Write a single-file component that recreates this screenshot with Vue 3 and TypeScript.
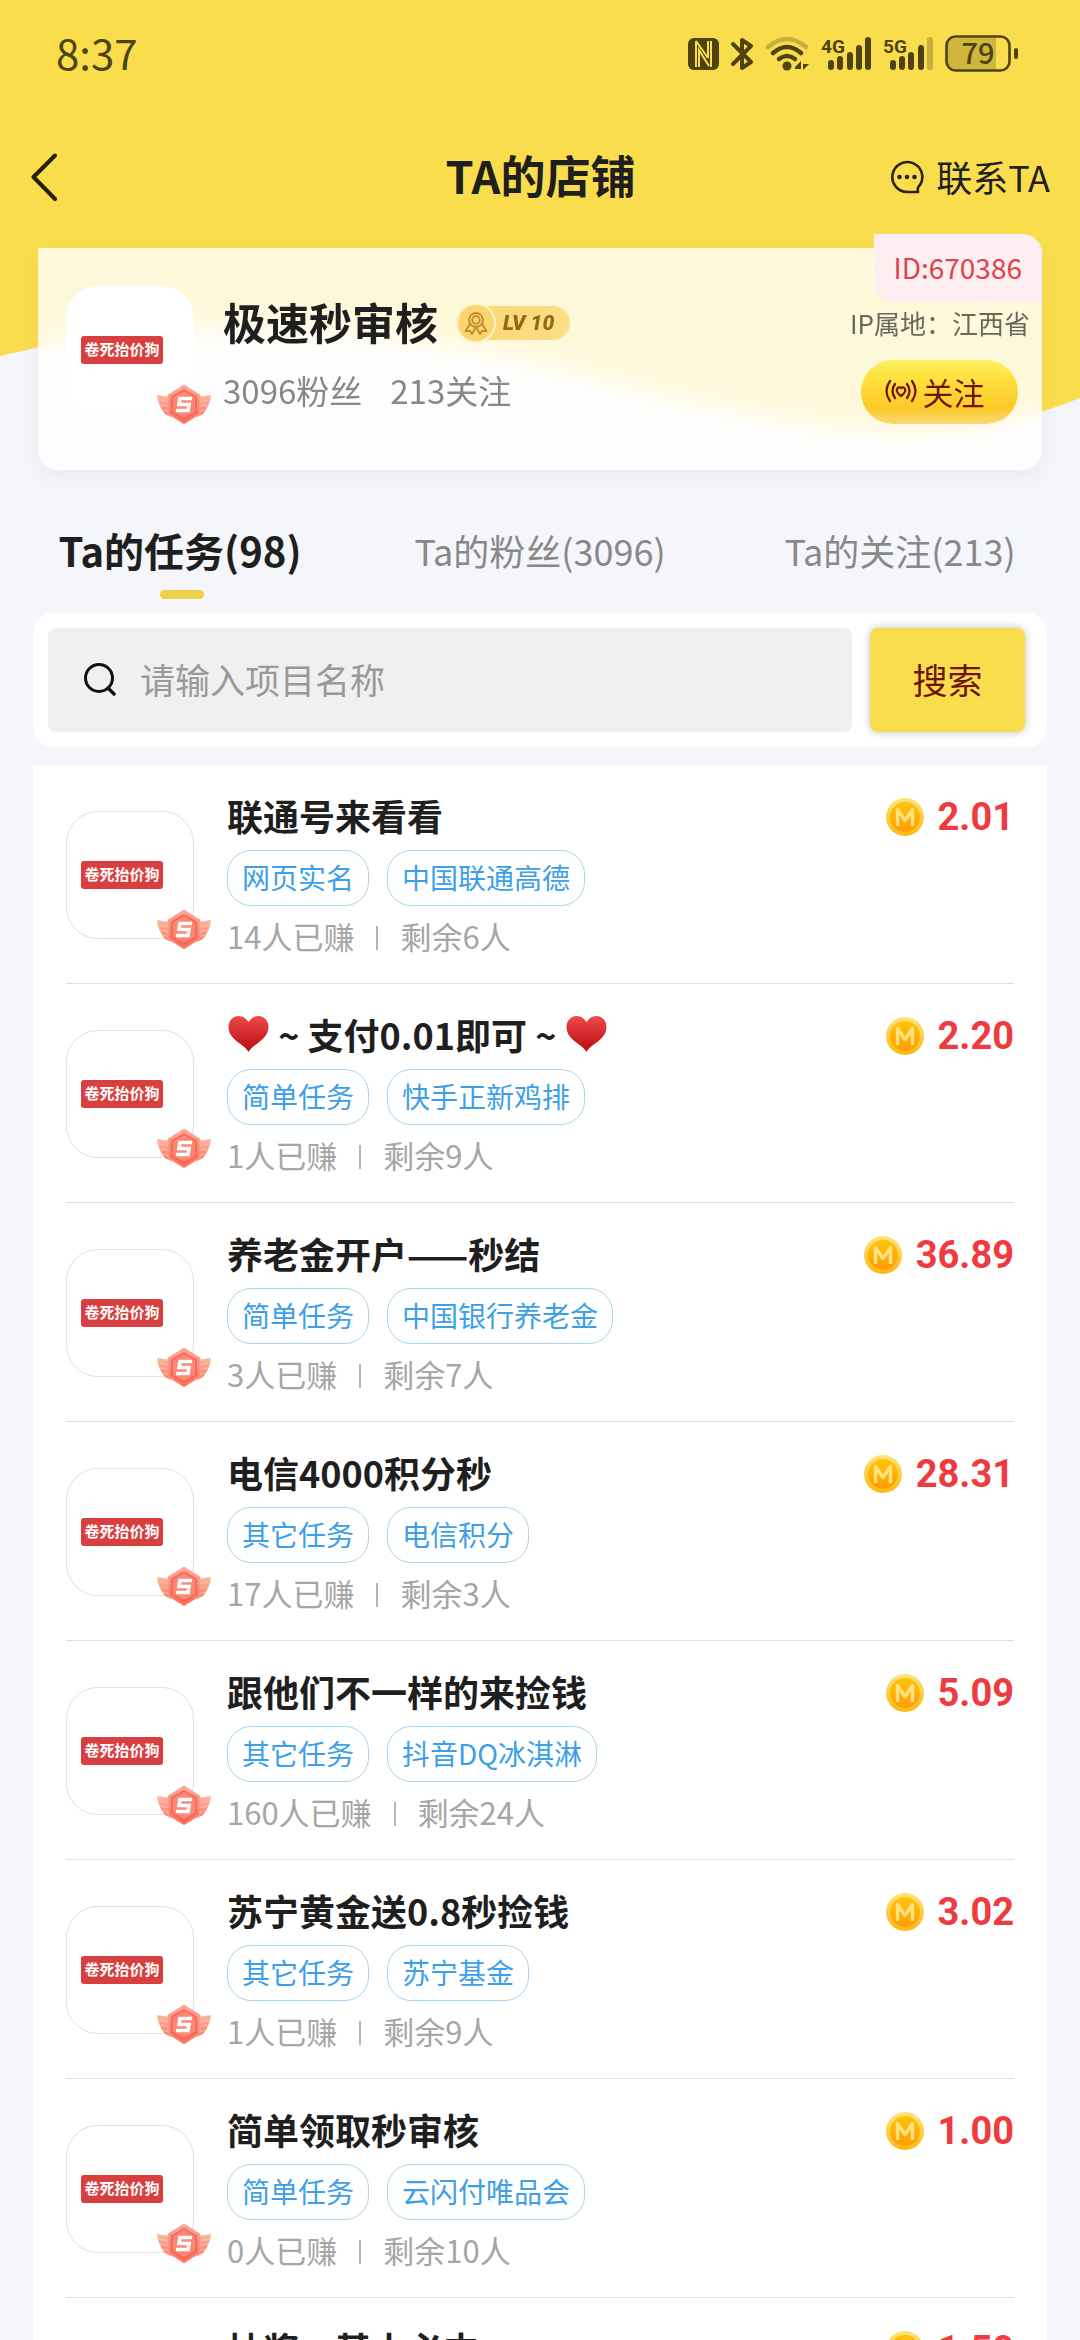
<script setup lang="ts">
import { ref } from 'vue'

interface Task {
  title: string
  tags: [string, string]
  done: number
  left: number
  price: string
}

const tasks: Task[] = [
  { title: '联通号来看看', tags: ['网页实名', '中国联通高德'], done: 14, left: 6, price: '2.01' },
  { title: '♥ ~ 支付0.01即可 ~ ♥', tags: ['简单任务', '快手正新鸡排'], done: 1, left: 9, price: '2.20' },
  { title: '养老金开户——秒结', tags: ['简单任务', '中国银行养老金'], done: 3, left: 7, price: '36.89' },
  { title: '电信4000积分秒', tags: ['其它任务', '电信积分'], done: 17, left: 3, price: '28.31' },
  { title: '跟他们不一样的来捡钱', tags: ['其它任务', '抖音DQ冰淇淋'], done: 160, left: 24, price: '5.09' },
  { title: '苏宁黄金送0.8秒捡钱', tags: ['其它任务', '苏宁基金'], done: 1, left: 9, price: '3.02' },
  { title: '简单领取秒审核', tags: ['简单任务', '云闪付唯品会'], done: 0, left: 10, price: '1.00' },
  { title: '抽奖，基本必中', tags: ['简单任务', '抽奖'], done: 0, left: 10, price: '1.50' },
]

const tabs = ['Ta的任务(98)', 'Ta的粉丝(3096)', 'Ta的关注(213)']
const activeTab = ref(0)
const keyword = ref('')

// Splits a title so that every heart becomes its own piece
const pieces = (title: string): string[] => title.split(/(♥)/).filter(Boolean)
</script>

<template>
  <div class="page">
    <svg class="wave" viewBox="0 0 1080 440" preserveAspectRatio="none" aria-hidden="true">
      <path fill="#fadd4d" d="M0 0H1080V398C1000 430 930 440 830 428C640 405 560 350 330 335C200 326 100 332 0 356Z" />
    </svg>

    <svg class="defs" width="0" height="0" aria-hidden="true">
      <defs>
        <linearGradient id="medalFill" x1="0" y1="0" x2="0" y2="1">
          <stop offset="0" stop-color="#fba797" /><stop offset="1" stop-color="#fb6a55" />
        </linearGradient>
        <linearGradient id="wingFill" x1="0" y1="0" x2="0" y2="1">
          <stop offset="0" stop-color="#fdb79e" /><stop offset="1" stop-color="#fa7763" />
        </linearGradient>
        <linearGradient id="coinFill" x1="0" y1="0" x2="0" y2="1">
          <stop offset="0" stop-color="#ffc40c" /><stop offset="1" stop-color="#ff9c05" />
        </linearGradient>
        <linearGradient id="coinRim" x1="0" y1="0" x2="0" y2="1">
          <stop offset="0" stop-color="#fbe57c" /><stop offset="1" stop-color="#fcb80e" />
        </linearGradient>
        <linearGradient id="heartFill" x1="0" y1="0" x2="0" y2="1">
          <stop offset="0" stop-color="#ef4a4c" /><stop offset="1" stop-color="#b80a0c" />
        </linearGradient>
        <symbol id="medal" viewBox="0 0 54 41">
          <path fill="url(#wingFill)" d="M0 11 14 13V33L8 30 5 26 3 22 1 17Z M54 11 40 13V33L46 30 49 26 51 22 53 17Z" />
          <path d="M1 16 13 18M3 21 13 23M5 26 13 28M53 16 41 18M51 21 41 23M49 26 41 28" stroke="#fcc0ae" stroke-width="1" />
          <path fill="url(#medalFill)" stroke="#fcab9b" stroke-width="1" d="M27 1 43 11V30L27 40 11 30V11Z" />
          <path fill="#fb8774" stroke="#f2604f" stroke-width="1.400" d="M27 6 39 13V28L27 35 15 28V13Z" />
          <path fill="none" stroke="#fff" stroke-width="3.600" d="M35 14.500H23L22 20.500H32L31 26.500H19" />
        </symbol>
        <symbol id="coin" viewBox="0 0 38 38">
          <circle cx="19" cy="19" r="19" fill="url(#coinRim)" />
          <circle cx="19" cy="19" r="15" fill="url(#coinFill)" />
          <path fill="none" stroke="#ffe27c" stroke-width="3.400" stroke-linejoin="round" d="M11.500 28V11.500L19 22.500 26.500 11.500V28" />
        </symbol>
        <symbol id="heart" viewBox="0 0 40 36">
          <path fill="url(#heartFill)" d="M20 36C16 28 0 24 0 11C0 4 5 0 10 0C15 0 18 3 20 6C22 3 25 0 30 0C35 0 40 4 40 11C40 24 24 28 20 36Z" />
        </symbol>
      </defs>
    </svg>

    <div class="status">
      <span class="clock">8:37</span>
      <svg class="indicators" viewBox="0 0 332 40" aria-hidden="true">
        <g fill="#4f4410">
          <rect x="0" y="4" width="31" height="32" rx="6" />
          <g fill="none" stroke="#fadd4d" stroke-width="2">
            <path d="M8 7V33M11 33V16L21 32M23 33V7M20 24V7M8 7 20 24" />
          </g>
          <path d="M45 10 63 28 54 34V6L63 12 45 30" fill="none" stroke="#4f4410" stroke-width="4" stroke-linejoin="round" stroke-linecap="round" />
          <g fill="none" stroke="#4f4410" stroke-width="4.500" stroke-linecap="round">
            <path opacity=".3" d="M80 13Q99 -3 118 13" />
            <path d="M85 19Q99 7 113 19" />
            <path d="M91 25Q99 19 107 25" />
          </g>
          <circle cx="99" cy="32" r="4.500" />
          <path d="M107 33 113 27V35H107ZM115 27V36L121 30H115Z" />
          <text x="133" y="19" class="net">4G</text>
          <rect x="140" y="26" width="6" height="10" rx="3" /><rect x="149" y="22" width="6" height="14" rx="3" />
          <rect x="159" y="18" width="6" height="18" rx="3" /><rect x="168" y="11" width="6" height="25" rx="3" />
          <rect x="177" y="3" width="6" height="33" rx="3" />
          <text x="195" y="19" class="net">5G</text>
          <rect x="202" y="26" width="6" height="10" rx="3" /><rect x="211" y="22" width="6" height="14" rx="3" />
          <rect x="220" y="18" width="6" height="18" rx="3" /><rect x="230" y="11" width="6" height="25" rx="3" />
          <rect x="239" y="3" width="6" height="33" rx="3" opacity=".3" />
          <path opacity=".25" d="M266 4H308V36H266Q259 36 259 28V12Q259 4 266 4Z" />
          <rect x="258.500" y="2.500" width="63" height="34" rx="9" fill="none" stroke="#4f4410" stroke-width="2.600" />
          <rect x="326" y="14" width="4" height="11" rx="2" />
          <text x="290" y="30" text-anchor="middle" class="battery">79</text>
        </g>
      </svg>
    </div>

    <header class="bar">
      <button class="back" type="button" aria-label="返回">
        <svg viewBox="0 0 26 48" width="26" height="48"><path d="M24 2.500 2.500 24 24 46" fill="none" stroke="#261f0c" stroke-width="4" stroke-linecap="round" stroke-linejoin="round" /></svg>
      </button>
      <h1>TA的店铺</h1>
      <button class="contact" type="button">
        <svg viewBox="0 0 34 34" width="34" height="34">
          <path d="M17 32A15 15 0 1 1 30 25Q27 27 28 32Z" fill="none" stroke="#2b230c" stroke-width="2.600" stroke-linejoin="round" />
          <circle cx="9.500" cy="17" r="2.300" fill="#2b230c" /><circle cx="17" cy="17" r="2.300" fill="#2b230c" /><circle cx="24.500" cy="17" r="2.300" fill="#2b230c" />
        </svg>
        <span>联系TA</span>
      </button>
    </header>

    <section class="profile">
      <div class="avatar plain">
        <span class="stamp">卷死抬价狗</span>
        <svg class="medal"><use href="#medal" /></svg>
      </div>
      <div class="who">
        <div class="name-line">
          <h2>极速秒审核</h2>
          <span class="level">
            <svg viewBox="0 0 40 40" width="40" height="40" aria-hidden="true">
              <circle cx="20" cy="20" r="19" fill="#fad572" stroke="#fef3c6" stroke-width="2" />
              <g fill="none" stroke="#c18c25" stroke-width="1.800" stroke-linejoin="round">
                <circle cx="20" cy="17" r="7" /><circle cx="20" cy="17" r="3.800" />
                <path d="M14 21 9.500 28 14 28 16 31 20 24 24 31 26 28 30.500 28 26 21" />
              </g>
            </svg>
            <span>LV 10</span>
          </span>
        </div>
        <div class="stats"><span>3096粉丝</span><span>213关注</span></div>
      </div>
      <div class="side">
        <span class="uid">ID:670386</span>
        <span class="region">IP属地：江西省</span>
        <button class="follow" type="button">
          <svg viewBox="0 0 32 24" width="32" height="24" aria-hidden="true">
            <g fill="none" stroke="#701407" stroke-width="2.200" stroke-linecap="round" stroke-linejoin="round">
              <path d="M5 2Q-2 12 5 22M10 5Q5 12 10 19M27 2Q34 12 27 22M22 5Q27 12 22 19" />
              <path d="M16 17C12 14 11 12 12 10C13 8 15 8 16 9C17 8 19 8 20 10C21 12 20 14 16 17Z" />
            </g>
          </svg>
          <span>关注</span>
        </button>
      </div>
    </section>

    <nav class="tabs">
      <button
        v-for="(tab, i) in tabs"
        :key="tab"
        type="button"
        :class="{ active: i === activeTab }"
        @click="activeTab = i"
      >{{ tab }}</button>
    </nav>

    <form class="search" @submit.prevent>
      <label class="field">
        <svg viewBox="0 0 34 34" width="34" height="34" aria-hidden="true">
          <circle cx="16" cy="16" r="13.500" fill="none" stroke="#111" stroke-width="3" />
          <path d="M25 26 31 32" stroke="#111" stroke-width="3.400" stroke-linecap="round" />
        </svg>
        <input v-model="keyword" type="text" placeholder="请输入项目名称" aria-label="项目名称" />
      </label>
      <button type="submit">搜索</button>
    </form>

    <ul class="list">
      <li v-for="task in tasks" :key="task.title" class="task">
        <div class="avatar">
          <span class="stamp">卷死抬价狗</span>
          <svg class="medal"><use href="#medal" /></svg>
        </div>
        <div class="body">
          <h3>
            <template v-for="(piece, i) in pieces(task.title)" :key="i">
              <svg v-if="piece === '♥'" class="heart" role="img" aria-label="♥"><use href="#heart" /></svg>
              <span v-else>{{ piece }}</span>
            </template>
          </h3>
          <div class="tags"><span v-for="tag in task.tags" :key="tag">{{ tag }}</span></div>
          <p class="meta"><span>{{ task.done }}人已赚</span><i></i><span>剩余{{ task.left }}人</span></p>
        </div>
        <div class="price">
          <svg class="coin" aria-hidden="true"><use href="#coin" /></svg>
          <b>{{ task.price }}</b>
        </div>
      </li>
    </ul>
  </div>
</template>

<style>
body {
  margin: 0;
  background: #f5f6fb;
}
</style>

<style scoped>
* {
  box-sizing: border-box;
}

.page {
  position: relative;
  isolation: isolate;
  display: flex;
  flex-direction: column;
  height: 100vh;
  overflow: hidden;
  background: #f5f6fb;
  color: #1f1f1f;
  font-family: "Noto Sans CJK SC", sans-serif;
}

h1, h2, h3, p, ul {
  margin: 0;
  padding: 0;
}

button {
  border: 0;
  padding: 0;
  background: none;
  color: inherit;
  font: inherit;
}

.wave {
  position: absolute;
  z-index: -1;
  top: 0;
  left: 0;
  width: 100%;
  height: 440px;
}

.defs {
  position: absolute;
}

.status {
  flex: none;
  display: flex;
  align-items: center;
  justify-content: space-between;
  height: 108px;
  padding: 0 60px 0 56px;
  color: #4f4410;
}

.clock {
  padding-bottom: 4px;
  font-size: 42px;
  line-height: 48px;
}

.indicators {
  width: 332px;
  height: 40px;
}

.net {
  font: 700 19px Roboto, sans-serif;
}

.battery {
  font: 500 29px "Noto Sans CJK SC", sans-serif;
}

.bar {
  flex: none;
  display: grid;
  grid-template-columns: 1fr auto 1fr;
  align-items: center;
  height: 140px;
  padding: 0 30px 2px 31px;
}

.back {
  justify-self: start;
  display: flex;
}

.bar h1 {
  padding-bottom: 4px;
  font-size: 45px;
  font-weight: 700;
  line-height: 60px;
}

.contact {
  justify-self: end;
  display: flex;
  align-items: center;
  gap: 12px;
  font-size: 36px;
  line-height: 48px;
}

.contact span {
  padding-bottom: 2px;
}

.profile {
  flex: none;
  position: relative;
  display: flex;
  height: 222px;
  margin: 0 38px;
  padding: 38px 12px 0 28px;
  border-radius: 0 0 20px 20px;
  background: rgba(255, 255, 255, 0.8);
  backdrop-filter: blur(12px);
  box-shadow: 0 8px 20px rgba(60, 60, 90, 0.05);
}

.avatar {
  flex: none;
  position: relative;
  display: flex;
  align-items: center;
  width: 128px;
  height: 128px;
  padding-left: 14px;
  border: 1px solid #e0e0e0;
  border-radius: 32px;
  background: #fff;
}

.avatar.plain {
  border-color: #fff;
}

.stamp {
  width: 82px;
  padding-bottom: 2px;
  border-radius: 3px;
  background: #da3f3f;
  color: #fff;
  font-size: 15px;
  font-weight: 700;
  line-height: 26px;
  text-align: center;
}

.medal {
  position: absolute;
  right: -18px;
  bottom: -12px;
  width: 54px;
  height: 41px;
}

.who {
  flex: 1;
  padding: 4px 0 0 29px;
}

.name-line {
  display: flex;
  align-items: center;
  gap: 18px;
}

.name-line h2 {
  font-size: 43px;
  font-weight: 700;
  line-height: 62px;
}

.level {
  display: flex;
  align-items: center;
  height: 34px;
  padding-right: 16px;
  margin-top: 4px;
  border-radius: 17px;
  background: linear-gradient(90deg, #fad572, #fbdf86);
  color: #966813;
  font: italic 900 21px Roboto, sans-serif;
}

.level span {
  margin-left: 7px;
}

.stats {
  display: flex;
  gap: 28px;
  padding-top: 14px;
  color: #888;
  font-size: 33px;
  line-height: 48px;
}

.side {
  display: flex;
  flex-direction: column;
  align-items: flex-end;
}

.uid {
  position: absolute;
  top: -14px;
  right: 0;
  padding: 0 20px 2px;
  border-radius: 0 20px 0 20px;
  background: #fdeff1;
  color: #dc434a;
  font-size: 28px;
  line-height: 66px;
}

.region {
  margin-top: 18px;
  color: #69685c;
  font-size: 26px;
  line-height: 38px;
}

.follow {
  display: flex;
  align-items: center;
  justify-content: center;
  gap: 6px;
  width: 157px;
  height: 64px;
  margin: 18px 12px 0 0;
  padding: 0 10px 2px 0;
  border-radius: 32px;
  background: linear-gradient(#fcf062, #fee340 25%, #fdc927 75%, #fbd974);
  color: #701407;
  font-size: 31px;
}

.tabs {
  flex: none;
  display: grid;
  grid-template-columns: repeat(3, 1fr);
  height: 143px;
  padding-top: 50px;
}

.tabs button {
  position: relative;
  height: 60px;
  color: #888;
  font-size: 36px;
  line-height: 60px;
}

.tabs .active {
  color: #1f1f1f;
  font-size: 40px;
  font-weight: 700;
}

.tabs .active::after {
  content: "";
  position: absolute;
  bottom: -19px;
  left: 50%;
  width: 44px;
  height: 9px;
  margin-left: -20px;
  border-radius: 5px;
  background: #ebd24a;
}

.search {
  flex: none;
  display: flex;
  gap: 18px;
  margin: 0 33px 18px;
  padding: 15px 22px 15px 15px;
  border-radius: 20px;
  background: #fff;
}

.field {
  flex: 1;
  display: flex;
  align-items: center;
  gap: 23px;
  height: 104px;
  padding: 0 35px 3px;
  border-radius: 8px;
  background: #f0f0f0;
}

.field input {
  flex: 1;
  min-width: 0;
  border: 0;
  padding: 0;
  outline: none;
  background: none;
  color: #333;
  font: inherit;
  font-size: 35px;
}

.field input::placeholder {
  color: #999;
}

.search button {
  width: 155px;
  padding-bottom: 4px;
  border-radius: 8px;
  background: #fadd4d;
  box-shadow: 0 0 8px rgba(0, 0, 0, 0.25);
  color: #701407;
  font-size: 35px;
}

.list {
  flex: 1;
  min-height: 0;
  margin: 0 33px;
  padding: 0 33px;
  overflow: hidden;
  background: #fff;
  list-style: none;
}

.task {
  display: flex;
  height: 219px;
  padding-top: 28px;
  border-bottom: 1px solid #e0e0e0;
}

.task .avatar {
  margin-top: 18px;
}

.body {
  flex: 1;
  padding-left: 33px;
}

.body h3 {
  display: flex;
  align-items: center;
  font-size: 36px;
  font-weight: 700;
  line-height: 44px;
  white-space: pre;
}

.heart {
  width: 43px;
  height: 36px;
}

.tags {
  display: flex;
  gap: 18px;
  margin-top: 13px;
}

.tags span {
  padding: 0 14px 2px;
  border: 1px solid #a9d3ee;
  border-radius: 24px;
  color: #3d9fe8;
  font-size: 28px;
  line-height: 52px;
}

.meta {
  display: flex;
  align-items: center;
  margin-top: 8px;
  color: #a6a6a6;
  font-size: 31px;
  line-height: 44px;
}

.meta i {
  width: 2px;
  height: 24px;
  margin: 3px 22px 0;
  background: #b5b5b5;
}

.price {
  display: flex;
  align-items: center;
  gap: 14px;
  height: 48px;
  color: #ee3b3f;
  font-family: Roboto, sans-serif;
  font-size: 38px;
}

.coin {
  width: 38px;
  height: 38px;
}
</style>
